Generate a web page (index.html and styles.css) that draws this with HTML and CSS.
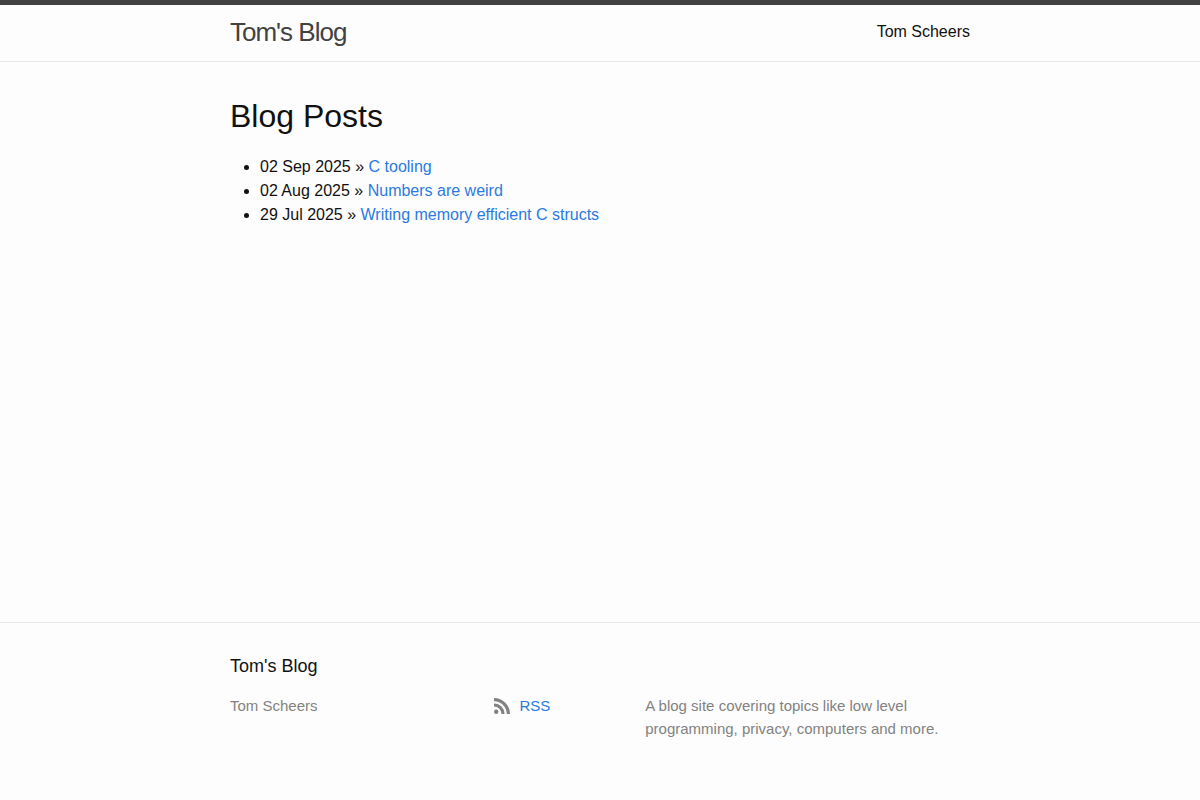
FILE: index.html
```html
<!DOCTYPE html>
<html lang="en">
<head>
    <meta charset="UTF-8">
    <meta name="viewport" content="width=device-width, initial-scale=1.0">
    <title>Tom's Blog</title>
    <link rel="stylesheet" href="styles.css">
</head>
<body>
    <header class="site-header">
        <div class="wrapper header-row">
            <a class="site-title" href="/">Tom's Blog</a>
            <nav class="site-nav">
                <a class="page-link" href="/about/">Tom Scheers</a>
            </nav>
        </div>
    </header>

    <main class="page-content">
        <div class="wrapper">
            <h1>Blog Posts</h1>
            <ul class="posts">
                <li><span>02 Sep 2025</span> » <a href="/c-tooling">C tooling</a></li>
                <li><span>02 Aug 2025</span> » <a href="/numbers-are-weird">Numbers are weird</a></li>
                <li><span>29 Jul 2025</span> » <a href="/memory-efficient-structs">Writing memory efficient C structs</a></li>
            </ul>
        </div>
    </main>

    <footer class="site-footer">
        <div class="wrapper">
            <h2 class="footer-heading">Tom's Blog</h2>
            <div class="footer-cols">
                <div class="footer-col">Tom Scheers</div>
                <div class="footer-col">
                    <a class="rss-link" href="/feed.xml">
                        <svg class="svg-icon" viewBox="0 0 16 16" aria-hidden="true">
                            <circle cx="2.2" cy="13.8" r="2.2"/>
                            <path d="M0 5.4v3.1A7.5 7.5 0 0 1 7.5 16h3.1A10.6 10.6 0 0 0 0 5.4z"/>
                            <path d="M0 0v3.2A12.8 12.8 0 0 1 12.8 16H16A16 16 0 0 0 0 0z"/>
                        </svg>
                        <span>RSS</span>
                    </a>
                </div>
                <div class="footer-col">
                    <p>A blog site covering topics like low level programming, privacy, computers and more.</p>
                </div>
            </div>
        </div>
    </footer>
</body>
</html>
```

FILE: styles.css
```css
* {
    box-sizing: border-box;
}
body, h1, h2, p, ul {
    margin: 0;
    padding: 0;
}
body {
    display: flex;
    flex-direction: column;
    min-height: 100vh;
    font-family: "Liberation Sans", Arial, sans-serif;
    font-size: 16px;
    line-height: 24px;
    color: #111;
    background-color: #fdfdfd;
}
h1, h2 {
    font-weight: 400;
}
a {
    color: #2a7ae2;
    text-decoration: none;
}
a:hover {
    color: #111;
    text-decoration: underline;
}
.wrapper {
    max-width: 800px;
    margin: 0 auto;
    padding: 0 30px;
}

/* Header */
.site-header {
    border-top: 5px solid #424242;
    border-bottom: 1px solid #e8e8e8;
}
.header-row {
    display: flex;
    justify-content: space-between;
    line-height: 54px;
}
.site-title {
    height: 56px;
    font-size: 26px;
    letter-spacing: -1px;
    color: #424242;
}
.page-link {
    color: #111;
}

/* Posts */
.page-content {
    flex: 1;
    padding: 30px 0;
}
h1 {
    margin-bottom: 15px;
    font-size: 32px;
    line-height: 48px;
}
.posts {
    margin-left: 30px;
}

/* Footer */
.site-footer {
    padding: 30px 0 60px;
    border-top: 1px solid #e8e8e8;
}
.footer-heading {
    margin-bottom: 14px;
    font-size: 18px;
    line-height: 27px;
}
.footer-cols {
    display: grid;
    grid-template-columns: 35fr 20fr 45fr;
    margin-left: -15px;
    font-size: 15px;
    line-height: 23px;
    color: #828282;
}
.footer-col {
    padding-left: 15px;
}
.svg-icon {
    width: 16px;
    height: 16px;
    margin-right: 5px;
    vertical-align: text-bottom;
    fill: #828282;
}
```
